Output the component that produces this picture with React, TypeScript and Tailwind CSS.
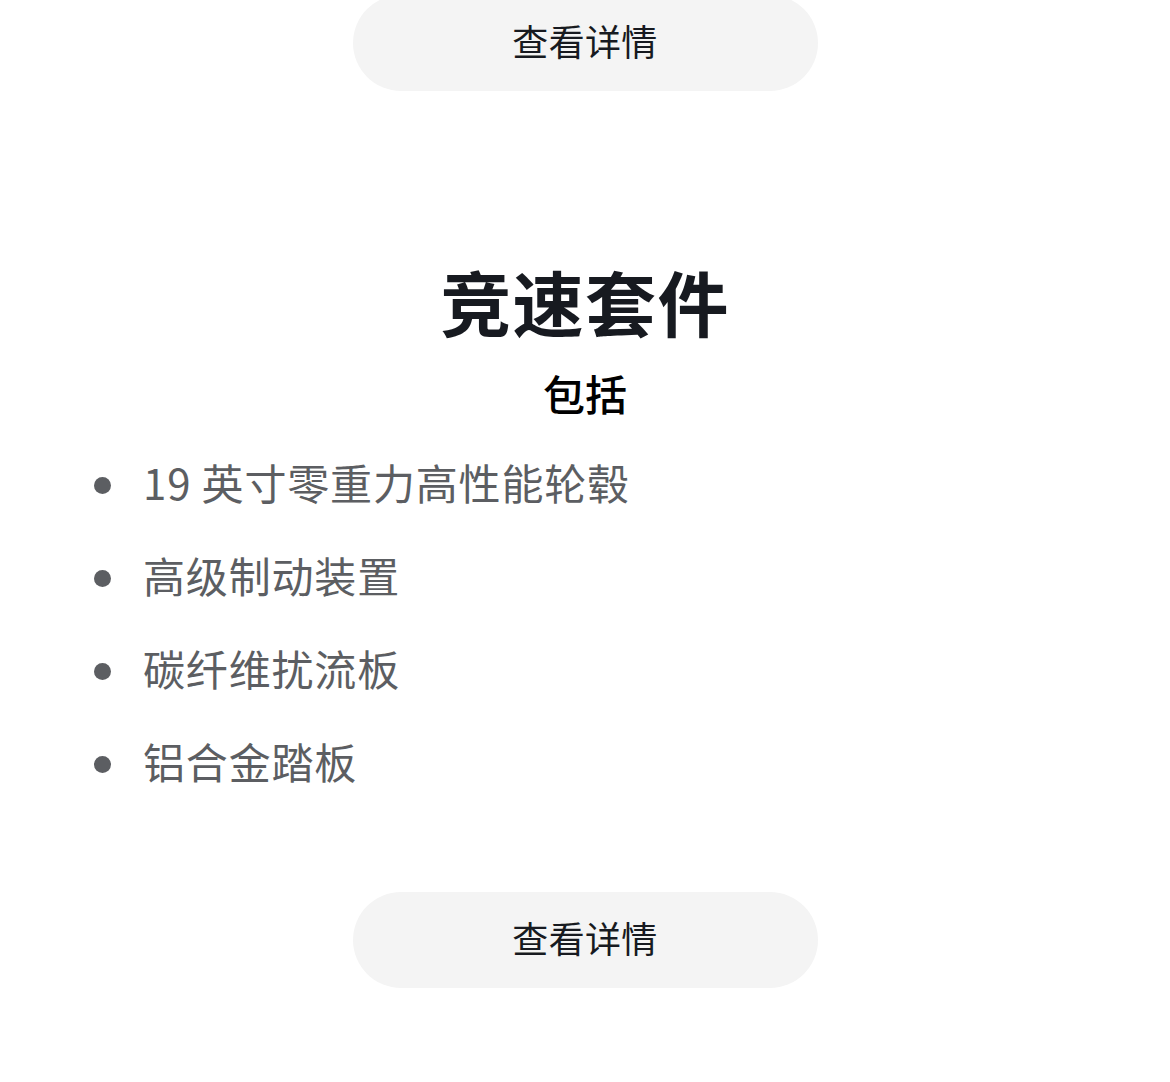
const items = ['19 英寸零重力高性能轮毂', '高级制动装置', '碳纤维扰流板', '铝合金踏板'];

const font = { fontFamily: '"Noto Sans CJK SC", "Noto Sans", sans-serif' };

function DetailButton({ className = '' }: { className?: string }) {
  return (
    <button
      className={`mx-auto flex h-[96px] w-[465px] items-center justify-center rounded-full bg-[#f4f4f4] pb-[6px] text-[36px] tracking-[0.01em] text-[#171a20] ${className}`}
    >
      查看详情
    </button>
  );
}

export default function App() {
  return (
    <div className="min-h-[1082px] overflow-hidden bg-white" style={font}>
      <DetailButton className="mt-[-5px]" />

      <section className="mt-[167px]">
        <h2 className="text-center text-[71px] font-bold leading-[84px] tracking-[0.02em] text-[#171a20]">
          竞速套件
        </h2>
        <p className="mt-[26px] text-center text-[42px] font-medium leading-[50px] text-black">包括</p>

        <ul className="mt-[39px] flex flex-col gap-[37px] pl-[94px]">
          {items.map((item) => (
            <li
              key={item}
              className="flex items-center text-[42px] leading-[50px] tracking-[0.02em] text-[#5c5e62]"
            >
              <span className="mr-[32px] h-[17px] w-[17px] shrink-0 rounded-full bg-[#5c5e62]" />
              <span className="pb-[6px]">{item}</span>
            </li>
          ))}
        </ul>
      </section>

      <DetailButton className="mt-[100px]" />
    </div>
  );
}
